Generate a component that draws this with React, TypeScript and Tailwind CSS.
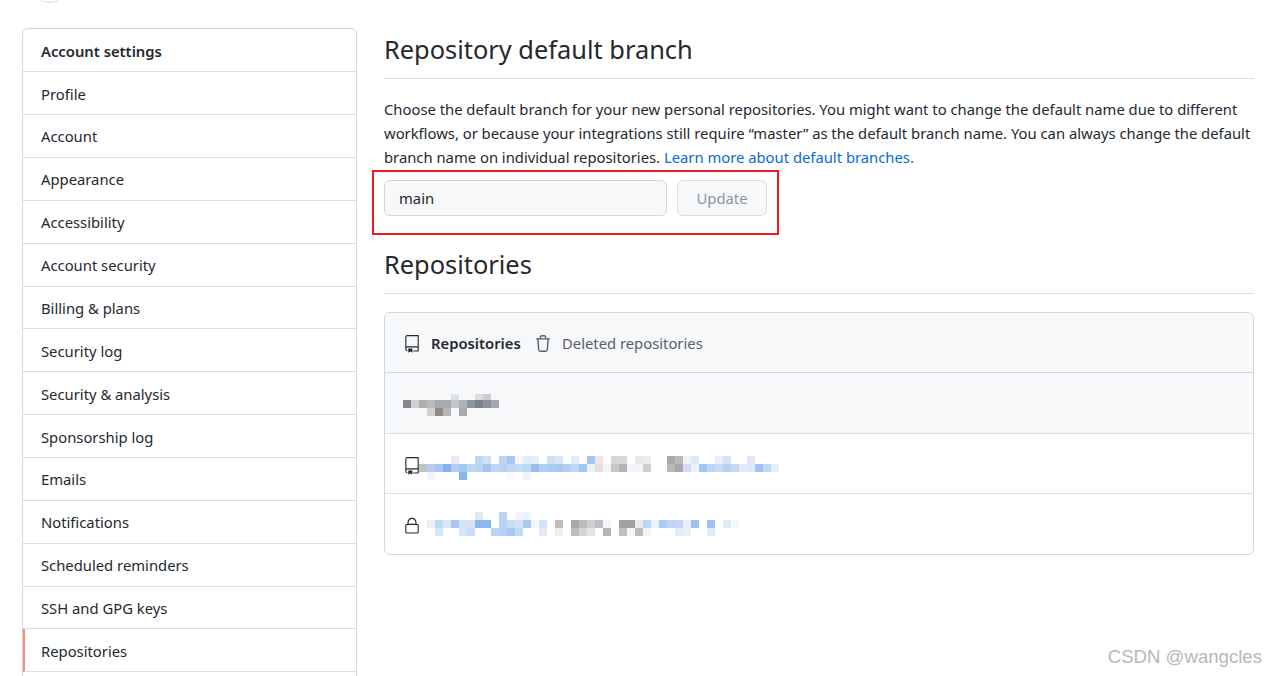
import { GoLock, GoRepo } from 'react-icons/go'

const font = { fontFamily: '"Noto Sans", "Open Sans", sans-serif' }

const menu = [
  'Profile',
  'Account',
  'Appearance',
  'Accessibility',
  'Account security',
  'Billing & plans',
  'Security log',
  'Security & analysis',
  'Sponsorship log',
  'Emails',
  'Notifications',
  'Scheduled reminders',
  'SSH and GPG keys',
]

// Blurred repository names: each row is a run of 8px blocks, '' leaves a gap
const blurOwner = [
  { y: 0, h: 6, cells: ['', '', '', '', '', '', '#dde3e8', '', '', '#dbdcdd', '#c9ccd0'] },
  { y: 6, h: 8, cells: ['#85868a', '#cfd0d3', '#b0adab', '#b8bcc2', '#a5abb1', '#a8abad', '#c1c5cc', '#aeb3b9', '#8c949c', '#79838d', '#8e9298', '#a5a8ae'] },
  { y: 14, h: 8, cells: ['', '', '', '#d3d1cf', '#8f8b87', '#b8b6b4', '', '#a8a9ac'] },
]

const blurRepoOne = [
  { y: 0, h: 8, cells: ['', '', '', '', '#e3ecf8', '', '', '#bcd6f5', '#cfe0f8', '', '#bcd5f5', '#a9c6f0', '#f6f5fb', '#e1ebf9', '#e6edf9', '', '#cfdff7', '#d6e5f8', '', '#e1ecf8', '', '#a9c5f0', '#eee3e6', '', '#d5d6d8', '#d8d7d7', '', '#e4eaf0', '#e9edf0', '', '', '#aaaaac', '#b8b9bb', '#eff3fb', '#dce9f9', '', '', '#e6effb', '#d6e1f7', '', '', '#dfe8f9'] },
  { y: 8, h: 8, cells: ['#c2c2c2', '#bcccec', '#a9c6ee', '#7fb5ee', '#b5cdf2', '#9ccdf0', '#bcd9f4', '#b9d3f4', '#a6c3ee', '#bcd6f5', '#bcd0f2', '#c0d8f6', '#c5dcf7', '#b5dcf5', '#a0b9ec', '#b0d0f2', '#a9cdf2', '#a5c9f2', '#b5cff2', '#c0d6f4', '#9cc8f2', '#e6f2fc', '#e9dcdf', '#f3f3f0', '#c6c8c8', '#b0b3bc', '#f2f5f8', '#f2f5f8', '#d0cfcb', '', '', '#b8b8ba', '#a8a8aa', '#d2dcf4', '#eaf3fb', '#9fc7f2', '#bcd6f5', '#c5dbf6', '#b6d2f4', '#c8d6f5', '#e2ecf9', '#dde8f9', '#a2c2f0', '#bfdcf6', '#e4eefa'] },
  { y: 16, h: 8, cells: ['', '#f2f6fc', '', '', '', '#8ab5ea', '', '', '', '', '', '#fbf9fd', '', '#eef3fc'] },
]

const blurRepoTwo = [
  { y: 0, h: 8, cells: ['', '', '', '', '', '', '#dfe8f4', '', '', '#bcd5f5', '', '#f4f2fb', '#eef2fc'] },
  { y: 8, h: 8, cells: ['#f2ecf8', '#bcdcf5', '#d4e6f9', '#a8c6ee', '#d6e4fa', '#d6e4fa', '#8ab9ee', '#8ab9ee', '', '#b9d2f4', '#c8dbf7', '#d3dff6', '#a9c8f0', '#f1f5fc', '#cfe2f8', '', '#bebebe', '', '#a9a9ab', '#bcbcc0', '#cfcfd1', '#bcc1c6', '#f0f6fa', '', '#a0a0a2', '#a0a0a2', '#e8eaea', '#bbd6f6', '#e8f2fc', '#aacbf2', '#bdd6f5', '#c8d4f6', '#e8eefb', '#a5bdee', '', '#9cc4f0', '', '#dfebfa', '#f5f9fd'] },
  { y: 16, h: 8, cells: ['', '#d2e6f8', '', '', '#d6e4f8', '#c8dcf6', '', '', '#bcd4f4', '#b8cff3', '#a9c8f0', '#bcdcf5', '', '', '#e3e8f7', '', '#f0eeec', '', '#b9bfc6', '#d8d6d2', '#e4e4e4', '', '#b6b6b4', '', '#c0c2c2', '#f6f6f6', '#bcbcbc', '#f2f2f2', '', '', '', '#e4ecfb', '#e9effc', '', '', '#dfebf8'] },
]

type BlurRow = { y: number; h: number; cells: string[] }

function Blur({ rows, width, height, className }: { rows: BlurRow[]; width: number; height: number; className?: string }) {
  return (
    <svg width={width} height={height} className={className} shapeRendering="crispEdges">
      {rows.map((row) =>
        row.cells.map((fill, i) =>
          fill ? <rect key={`${row.y}-${i}`} x={i * 8} y={row.y} width="8" height={row.h} fill={fill} /> : null
        )
      )}
    </svg>
  )
}

function BinIcon() {
  return (
    <svg width="14" height="17" viewBox="0 0 14 17" fill="none" stroke="#57606a" strokeWidth="1.4" className="ml-[15px] mt-[1px] shrink-0">
      <path d="M.4 3.9h13.2" strokeLinecap="round" />
      <path d="M4.4 3.9V2.3c0-.9.6-1.5 1.5-1.5h2.2c.9 0 1.5.6 1.5 1.5v1.6" />
      <path d="M1.9 3.9l.8 10.9c.1 1 .8 1.5 1.7 1.5h5.2c.9 0 1.6-.5 1.7-1.5l.8-10.9" />
    </svg>
  )
}

export default function App() {
  return (
    <div className="relative h-[676px] overflow-hidden bg-white text-[14.8px] text-[#24292f]" style={font}>
      {/* bottom of the avatar cut off by the screenshot */}
      <div className="absolute left-[33px] top-[-30px] h-[33px] w-[33px] rounded-full border border-[#d8dee4]" />

      <div className="flex gap-[27px] pl-[22px] pr-[22px] pt-[28px]">
        <aside className="h-[700px] w-[335px] shrink-0 rounded-t-[6px] border border-[#d0d7de]">
          <div className="flex h-[43.3px] items-center border-b border-[#d8dee4] pl-[18px] pt-[2px] font-semibold">Account settings</div>
          {menu.map((item) => (
            <div key={item} className="flex h-[42.86px] items-center border-b border-[#d8dee4] pl-[18px] pt-[1px]">
              {item}
            </div>
          ))}
          <div className="flex h-[43px] items-center border-b border-[#d8dee4] border-l-[2px] border-l-[#fd8c73] pl-[16px] pt-[1px]">
            Repositories
          </div>
        </aside>

        <main className="w-[870px]">
          <h2 className="flex h-[51px] items-center border-b border-[#d8dee4] pb-[6px] text-[25.4px] leading-none">
            Repository default branch
          </h2>
          <p className="mt-[18px] leading-[24px]">
            Choose the default branch for your new personal repositories. You might want to change the default name due to different workflows, or because your integrations still require “master” as the default branch name. You can always change the default branch name on individual repositories.{' '}
            <span className="text-[#0969da]">Learn more about default branches.</span>
          </p>

          <div className="relative mt-[11px] flex gap-[10px]">
            <div className="flex h-[36px] w-[283px] items-center rounded-[6px] border border-[#d0d7de] bg-[#f6f8fa] pl-[14px] pt-[1px]">main</div>
            <div className="flex h-[36px] w-[90px] items-center justify-center rounded-[6px] border border-[#d8dee4] bg-[#f6f8fa] pt-[1px] text-[#8c959f]">Update</div>
            {/* red annotation round the form */}
            <div className="absolute left-[-12px] top-[-10px] h-[65px] w-[407px] border-2 border-[#ed1c24]" />
          </div>

          <h2 className="mt-[28px] flex h-[50px] items-center border-b border-[#d8dee4] pb-[8px] text-[25.4px] leading-none">
            Repositories
          </h2>

          <div className="mt-[18px] overflow-hidden rounded-[6px] border border-[#d0d7de]">
            <div className="flex h-[60px] items-center border-b border-[#d0d7de] bg-[#f6f8fa] pl-[18px] pt-[1px]">
              <GoRepo className="mt-[2px] h-[18px] w-[18px] shrink-0 text-[#24292f]" />
              <span className="ml-[10px] w-[90px] whitespace-nowrap font-semibold">Repositories</span>
              <BinIcon />
              <span className="ml-[12px] text-[#57606a]">Deleted repositories</span>
            </div>
            <div className="flex h-[61px] items-center border-b border-[#d8dee4] bg-[#f6f8fa] pl-[18px]">
              <Blur rows={blurOwner} width={96} height={22} className="mt-[4px] shrink-0" />
            </div>
            <div className="flex h-[60px] items-center border-b border-[#d8dee4] pl-[18px]">
              <GoRepo className="mt-[5px] h-[18px] w-[18px] shrink-0 text-[#24292f]" />
              <Blur rows={blurRepoOne} width={361} height={24} className="ml-[-2px] mt-[8px] shrink-0" />
            </div>
            <div className="flex h-[60px] items-center pl-[18px]">
              <GoLock className="mt-[3px] h-[18px] w-[18px] shrink-0 text-[#24292f]" />
              <Blur rows={blurRepoTwo} width={312} height={24} className="ml-[6px] shrink-0" />
            </div>
          </div>
        </main>
      </div>

      <div className="absolute right-[14px] top-[646px] text-[18.6px] leading-[22px] text-[#b8b8b8]" style={{ fontFamily: '"Liberation Sans", sans-serif' }}>
        CSDN @wangcles
      </div>
    </div>
  )
}
